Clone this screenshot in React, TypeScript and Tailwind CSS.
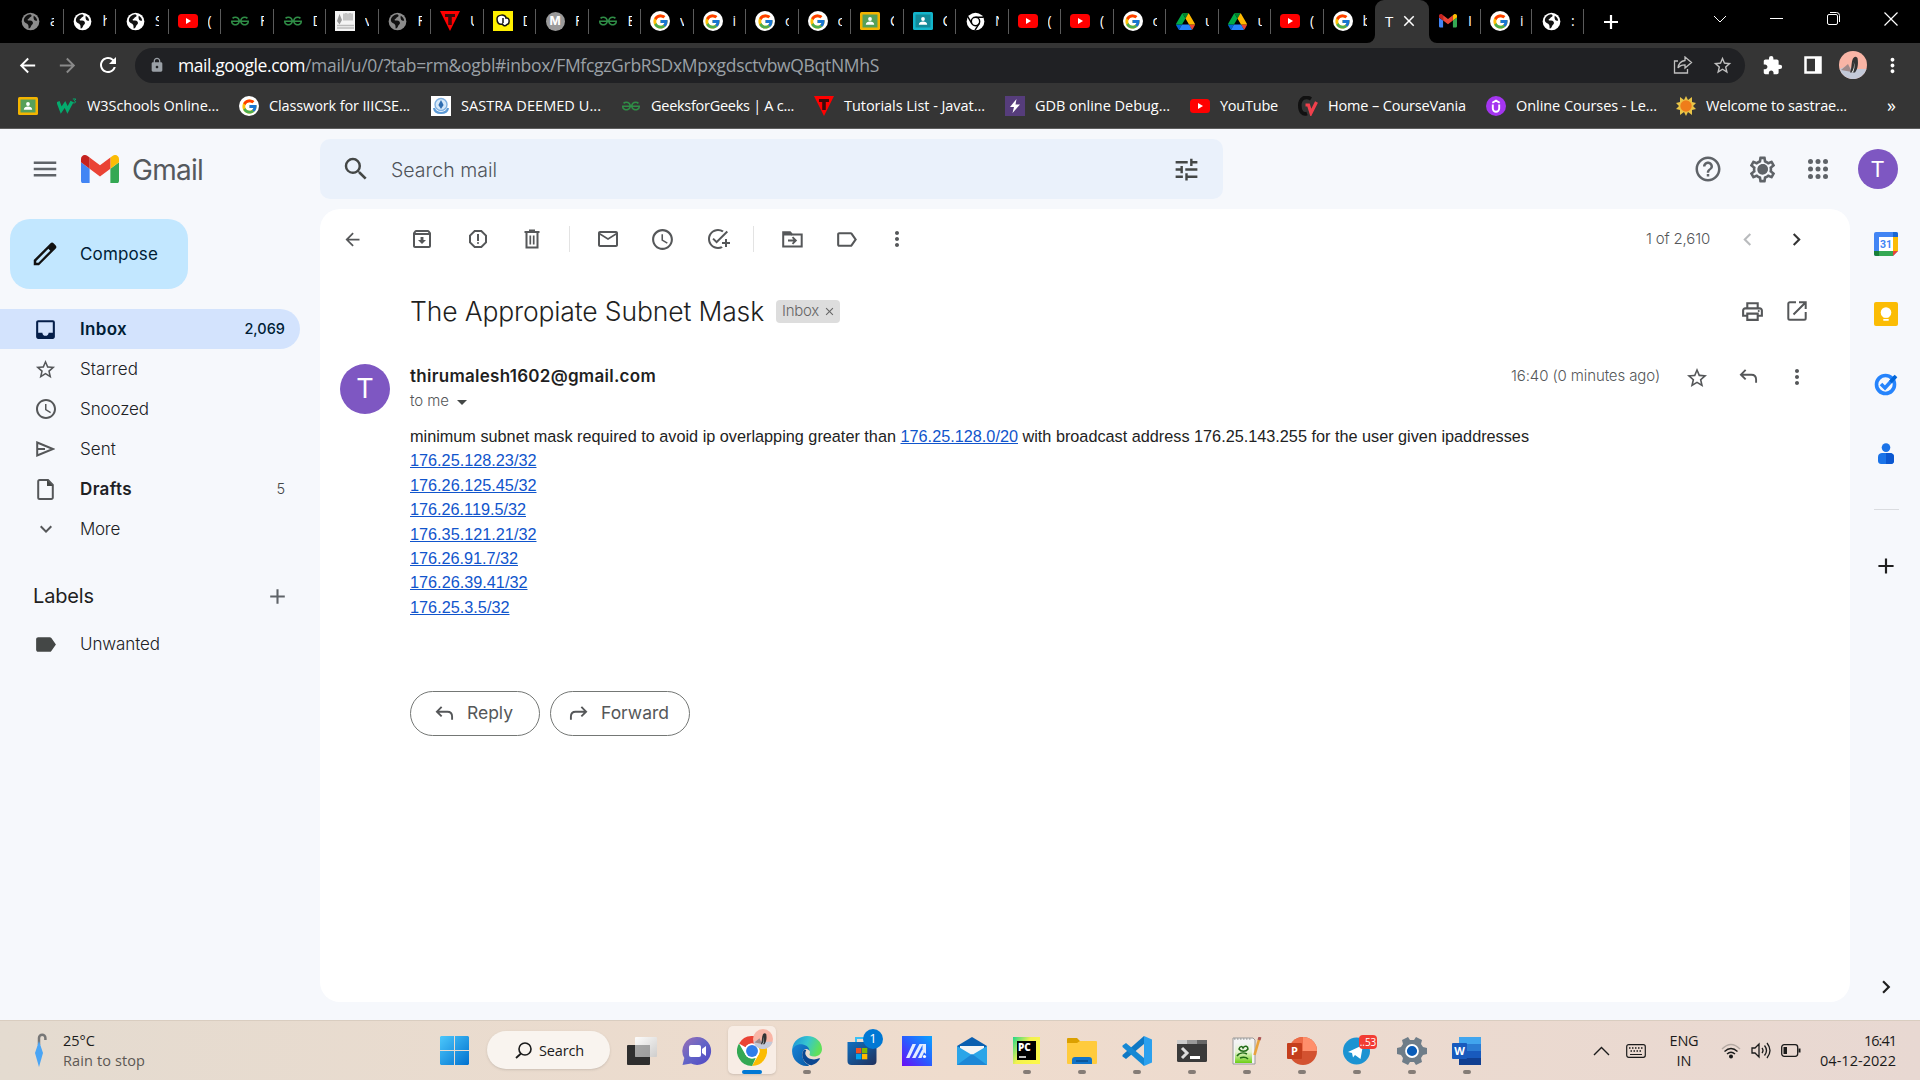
import React, { useLayoutEffect, useRef, useState } from "react";
import {
  MdMenu, MdSearch, MdTune, MdHelpOutline, MdOutlineSettings, MdOutlineArchive, MdOutlineReportGmailerrorred,
  MdMailOutline, MdAccessTime, MdAddTask, MdLabelOutline, MdMoreVert,
  MdChevronLeft, MdChevronRight, MdOutlinePrint, MdStarBorder, MdInbox,
  MdExpandMore, MdLabel, MdAdd, MdArrowBack, MdArrowForward, MdRefresh, MdLock, MdExtension, MdClose, MdArrowDropDown,
} from "react-icons/md";
import { FcGoogle } from "react-icons/fc";
import { SiGeeksforgeeks } from "react-icons/si";

/* Text whose tracking is adjusted so that it spans exactly `w` pixels. */
function Fit({ w, className = "", children }: { w: number; className?: string; children: string }) {
  const ref = useRef<HTMLSpanElement>(null);
  const [ls, setLs] = useState(0);
  useLayoutEffect(() => {
    if (ref.current) setLs((w - ref.current.getBoundingClientRect().width) / children.length);
  }, []);
  return (
    <span ref={ref} className={"inline-block shrink-0 whitespace-pre " + className} style={{ letterSpacing: ls + "px" }}>
      {children}
    </span>
  );
}

function Cell({ w, children, className = "" }: { w: number; children?: React.ReactNode; className?: string }) {
  return (
    <div className={"flex h-full shrink-0 items-center justify-center " + className} style={{ width: w }}>
      {children}
    </div>
  );
}

/* ---------- favicons ---------- */
const Globe = ({ c = "#fff" }: { c?: string }) => (
  <svg width="19" height="19" viewBox="0 0 20 20">
    <circle cx="10" cy="10" r="9.3" fill={c} />
    <path d="M3.2 7C4.300 4.600 6.500 2.800 9.600 2.400c1.800.6 2 1.800.8 2.700-1.500.5-1.400 1.700-2.800 2.200-1.200.5-.6 1.600.5 1.700 2 0 4.200.3 4.500 2.200.2 1.800-1.600 2-2 3.600-.3 1.600-1.500 2.600-2.300 2.700-.8-1.500.1-3-.9-4.200C6.600 12 4.200 11.500 3.300 10c-.4-1-.4-2-.1-3zM13.500 4c2 1.100 3.200 2.800 3.500 5-1.200.6-2.600.1-3.200-.8-.6-1.200-.9-2.900-.3-4.200z" fill="#111" />
  </svg>
);
const YT = ({ s = 20 }: { s?: number }) => (
  <svg width={s} height={s} viewBox="0 0 20 20">
    <rect x="0" y="3" width="20" height="14" rx="3.500" fill="#f00" />
    <path d="M8 7l5 3-5 3z" fill="#fff" />
  </svg>
);
const G = () => (
  <span className="flex size-5 items-center justify-center rounded-full bg-white"><FcGoogle size={17} /></span>
);
const GfG = ({ s = 18 }: { s?: number }) => <SiGeeksforgeeks size={s} color="#2f8d46" />;
const Classroom = ({ frame = "#f4b400", board = "#57a05a" }: { frame?: string; board?: string }) => (
  <svg width="20" height="18" viewBox="0 0 20 18">
    <rect width="20" height="18" rx="1.500" fill={frame} />
    <rect x="2.500" y="2.500" width="15" height="13" fill={board} />
    <circle cx="10" cy="7" r="1.900" fill="#fff" />
    <path d="M5.800 12.800c0-2.300 2-3.200 4.200-3.200s4.200.9 4.200 3.200z" fill="#fff" />
  </svg>
);
const Drive = () => (
  <svg width="19" height="17" viewBox="0 0 87.3 78">
    <path d="m6.600 66.850 3.850 6.650c.8 1.400 1.950 2.500 3.300 3.300l13.750-23.800h-27.500c0 1.550.4 3.100 1.200 4.500z" fill="#0066da" />
    <path d="m43.650 25-13.750-23.800c-1.350.8-2.500 1.900-3.300 3.300l-25.400 44a9.060 9.060 0 0 0 -1.200 4.500h27.500z" fill="#00ac47" />
    <path d="m73.550 76.800c1.350-.8 2.500-1.900 3.300-3.300l1.600-2.750 7.650-13.250c.8-1.400 1.200-2.950 1.200-4.500h-27.502l5.852 11.500z" fill="#ea4335" />
    <path d="m43.650 25 13.750-23.800c-1.350-.8-2.900-1.200-4.500-1.200h-18.500c-1.600 0-3.150.45-4.500 1.200z" fill="#00832d" />
    <path d="m59.800 53h-32.300l-13.750 23.800c1.350.8 2.900 1.200 4.500 1.200h50.800c1.600 0 3.150-.45 4.500-1.200z" fill="#2684fc" />
    <path d="m73.400 26.500-12.700-22c-.8-1.400-1.950-2.500-3.300-3.300l-13.750 23.800 16.150 28h27.450c0-1.550-.4-3.100-1.200-4.500z" fill="#ffba00" />
  </svg>
);
const TriT = () => (
  <svg width="20" height="20" viewBox="0 0 20 20">
    <path d="M0 0h20L10 20z" fill="#f00" />
    <path d="M5 3h10v3h-3.200v8H8.200V6H5z" fill="#3a0a0a" />
  </svg>
);
const Sheet = () => (
  <svg width="20" height="20" viewBox="0 0 20 20">
    <rect width="20" height="20" fill="#f4f4f4" />
    <path d="M4.500 3l2.500 6-2.500 4.500L2 10z" fill="#999" />
    <path d="M9 2.500v7M11 2v7.500M13 2.500v7M15 2v7.500M17 2.500v7" stroke="#aaa" strokeWidth="1.300" />
    <path d="M2 14.500h17M2 17h17" stroke="#bbb" strokeWidth="1.500" />
  </svg>
);
const Yellow = () => (
  <svg width="20" height="20" viewBox="0 0 20 20">
    <rect width="20" height="20" fill="#fff000" />
    <path d="M4 8c0-5 9-5 9-1 4-1 4 6 1 6.500-2 2.500-4 1-4.500-.5C6 14 4 12 4 8z" fill="#fff" stroke="#111" strokeWidth="1.500" />
    <path d="M10 7v5" stroke="#111" strokeWidth="1.500" />
  </svg>
);
const MBall = () => (
  <span className="flex size-[19px] items-center justify-center rounded-full bg-[#9a9a9a] font-['Inter'] text-[12px] font-bold text-white">M</span>
);
const ChromeMono = () => (
  <svg width="19" height="19" viewBox="0 0 20 20">
    <circle cx="10" cy="10" r="9.300" fill="#fff" />
    <circle cx="10" cy="10" r="4.400" fill="#fff" stroke="#000" strokeWidth="1.500" />
    <path d="M10 5.600h8.500M6.200 12.200L2 5.200M13.800 12.200l-4.300 7" stroke="#000" strokeWidth="1.500" />
  </svg>
);
const MLogo = ({ w }: { w: number }) => (
  <svg width={w} height={w * 0.75} viewBox="52 42 88 66">
    <path fill="#4285f4" d="M58 108h14V74L52 59v43c0 3.320 2.690 6 6 6" />
    <path fill="#34a853" d="M120 108h14c3.320 0 6-2.690 6-6V59l-20 15" />
    <path fill="#fbbc04" d="M120 48v26l20-15v-8c0-7.420-8.470-11.650-14.400-7.200" />
    <path fill="#ea4335" d="M72 74V48l24 18 24-18v26L96 92" />
    <path fill="#c5221f" d="M52 51v8l20 15V48l-5.600-4.200c-5.940-4.450-14.400-.22-14.400 7.200" />
  </svg>
);
const W3 = () => (
  <svg width="20" height="18" viewBox="0 0 20 18">
    <path d="M1 4.500l3.200 8.500L8 7.500l2.500 5.500L15 4.500" fill="none" stroke="#04aa6d" strokeWidth="3.400" />
    <path d="M15.800 2h3l-1.500 1.800c2.200.2 1.600 2.800-1.200 2" fill="none" stroke="#04aa6d" strokeWidth="1" />
  </svg>
);
const Sastra = () => (
  <svg width="20" height="20" viewBox="0 0 20 20">
    <rect width="20" height="20" fill="#fff" />
    <circle cx="10" cy="8.500" r="6" fill="#d6e8f8" stroke="#7fb0e0" strokeWidth="1.400" />
    <path d="M10 4l2.600 5L10 13 7.400 9z" fill="#2f6db0" />
    <path d="M3 12q1 5 7 5t7-5" stroke="#5c9ad6" strokeWidth="2.200" fill="none" />
  </svg>
);
const Gdb = () => (
  <svg width="20" height="20" viewBox="0 0 20 20">
    <rect width="20" height="20" fill="#563d7c" />
    <path d="M11.500 3L5 11h4l-1.500 6L15 8.500h-4.500z" fill="#fff" />
  </svg>
);
const CV = () => (
  <svg width="20" height="20" viewBox="0 0 20 20">
    <path d="M13 3C7-1 1.800 3 1.800 9.500S5 19 9 17.500" fill="none" stroke="#111" strokeWidth="3.600" />
    <path d="M7.500 9h3l2.500 8L18.500 6" fill="none" stroke="#f0404c" strokeWidth="3.200" />
  </svg>
);
const Udemy = () => (
  <svg width="20" height="20" viewBox="0 0 20 20">
    <circle cx="10" cy="10" r="10" fill="#a435f0" />
    <path d="M6.800 8.500v4a3.200 3.200 0 0 0 6.400 0v-4M6.300 6.800L10 4.600l3.700 2.200" fill="none" stroke="#fff" strokeWidth="1.900" />
  </svg>
);
const Sun = () => (
  <svg width="20" height="20" viewBox="0 0 20 20">
    <path d="M10 0l2 4 4-3 0 5 4 1-3 3 3 3-4 1 0 5-4-3-2 4-2-4-4 3 0-5-4-1 3-3-3-3 4-1 0-5 4 3z" fill="#e9c447" />
    <circle cx="10" cy="10" r="5.700" fill="#ef7d1a" />
  </svg>
);
const Penguin = ({ s }: { s: number }) => (
  <svg width={s} height={s} viewBox="0 0 28 28">
    <circle cx="14" cy="14" r="14" fill="#f9b5a6" />
    <path d="M.6 18L8 15l6 3 13.500 0A14 14 0 0 1 .6 18z" fill="#c3c9d8" />
    <path d="M2 19l7-6 4 8z" fill="#a08a8a" />
    <path d="M14 7.500q2-3 4.500-.5c1 5 .5 11-2.500 14.500h-5c2-4 1-10 3-14z" fill="#333" />
    <path d="M14.800 11c.7 4 0 8-2.300 10.500H14c1.500-3 2-7 .8-10.500z" fill="#eee" />
  </svg>
);

const tabs: [React.ReactNode, string][] = [
  [<Globe c="#8c8c8c" />, "a"], [<Globe />, "h"], [<Globe />, "S"], [<YT />, "("], [<GfG />, "F"], [<GfG />, "D"],
  [<Sheet />, "v"], [<Globe c="#8c8c8c" />, "F"], [<TriT />, "U"], [<Yellow />, "D"], [<MBall />, "F"], [<GfG />, "E"],
  [<G />, "v"], [<G />, "i"], [<G />, "c"], [<G />, "c"], [<Classroom />, "C"], [<Classroom frame="#12b5cb" board="#128a99" />, "C"],
  [<ChromeMono />, "N"], [<YT />, "("], [<YT />, "("], [<G />, "c"], [<Drive />, "u"], [<Drive />, "u"], [<YT />, "("], [<G />, "b"],
];

function Tab({ icon, t, line = true, w = "w-[52.5px]" }: { icon: React.ReactNode; t: string; line?: boolean; w?: string }) {
  return (
    <div className={"flex h-[42px] shrink-0 items-center pl-[9px] " + w}>
      <span className="flex w-5 shrink-0 justify-center">{icon}</span>
      <span className="ml-[10px] w-[4px] overflow-hidden text-[14px] leading-5 text-white">{t}</span>
      {line && <span className="ml-auto h-[25px] w-px shrink-0 bg-[#5a5a5a]" />}
    </div>
  );
}

function BrowserChrome() {
  return (
    <div className="h-[129px] border-b border-[#5e5e5e] bg-[#353535] font-['Open_Sans','Noto_Sans',sans-serif]">
      <div className="flex h-[43px] bg-black pl-[11px]">
        {tabs.map(([icon, t], i) => (
          <Tab key={i} icon={icon} t={t} line={i < 25} />
        ))}
        <div className="relative -ml-px h-[43px] w-[54px] shrink-0 rounded-t-[9px] bg-[#353535]">
          <svg className="absolute bottom-0 -left-2" width="8" height="8"><path d="M8 0v8H0a8 8 0 0 0 8-8" fill="#353535" /></svg>
          <svg className="absolute -right-2 bottom-0" width="8" height="8"><path d="M0 0v8h8a8 8 0 0 1-8-8" fill="#353535" /></svg>
          <div className="flex h-[42px] items-center pl-[10px]">
            <span className="w-[13px] text-[15px] text-white">T</span>
            <MdClose size={18} color="#fff" className="ml-[2px]" />
          </div>
        </div>
        <Tab icon={<MLogo w={18} />} t="I" w="w-[52px]" />
        <Tab icon={<G />} t="i" w="w-[51px]" />
        <Tab icon={<Globe />} t=":" w="w-[52px]" />
        <Cell w={54}><svg width="16" height="16" viewBox="0 0 16 16"><path d="M8 1v14M1 8h14" stroke="#fff" strokeWidth="2.200" /></svg></Cell>
        <div className="ml-auto flex h-[37px] items-center">
          <Cell w={57}><svg width="14" height="8"><path d="M1 1l6 6 6-6" stroke="#fff" fill="none" /></svg></Cell>
          <Cell w={57}><span className="h-px w-[13px] bg-white" /></Cell>
          <Cell w={57}>
            <svg width="14" height="14"><rect x=".5" y="2.500" width="10" height="10" rx="1.500" stroke="#fff" fill="none" /><path d="M3 .5h6.500a3 3 0 0 1 3 3V10" stroke="#fff" fill="none" /></svg>
          </Cell>
          <Cell w={58}><svg width="14" height="14"><path d="M.5.5l13 13M13.500.5l-13 13" stroke="#fff" fill="none" strokeWidth="1.200" /></svg></Cell>
        </div>
      </div>
      <div className="flex h-[44px] items-center pl-[7px]">
        <Cell w={40}><MdArrowBack size={23} color="#fff" /></Cell>
        <Cell w={41}><MdArrowForward size={23} color="#8a8a8a" /></Cell>
        <Cell w={40}><MdRefresh size={24} color="#fff" /></Cell>
        <div className="ml-[7px] flex h-[35px] w-[1610px] items-center rounded-full bg-[#202124] pl-[14px]">
          <MdLock size={16} color="#9aa0a6" />
          <span className="ml-[13px] flex text-[17.500px]">
            <Fit w={127} className="text-white">mail.google.com</Fit>
            <Fit w={574} className="text-[#9aa0a6]">/mail/u/0/?tab=rm&ogbl#inbox/FMfcgzGrbRSDxMpxgdsctvbwQBqtNMhS</Fit>
          </span>
          <svg className="ml-auto" width="20" height="18" viewBox="0 0 20 18"><path d="M5 5H1.500v12h13v-4M12 1l6.500 5.500L12 12V8.800c-3.500 0-5.500 1-7 3.200.5-4 3-7 7-7.500z" fill="none" stroke="#c0c0c0" strokeWidth="1.300" /></svg>
          <MdStarBorder size={21} color="#c0c0c0" className="mr-[12px] ml-[19px]" />
        </div>
        <div className="ml-[6px] flex h-[44px] items-center">
          <Cell w={42}><MdExtension size={21} color="#fff" /></Cell>
          <Cell w={39}><svg width="18" height="18"><rect x="1.500" y="1.500" width="15" height="15" fill="none" stroke="#fff" strokeWidth="2.500" /><path d="M11 2h6v14h-6z" fill="#fff" /></svg></Cell>
          <Cell w={42}><Penguin s={28} /></Cell>
          <Cell w={37}><MdMoreVert size={23} color="#fff" /></Cell>
        </div>
      </div>
      <div className="flex h-[38px] items-center pl-[18px] text-[14.5px] text-white">
        <Classroom />
        <Bm icon={<W3 />} ml="ml-[19px]" w={132}>W3Schools Online...</Bm>
        <Bm icon={<G />} ml="ml-[20px]" w={141}>Classwork for IIICSE...</Bm>
        <Bm icon={<Sastra />} ml="ml-[21px]" w={140}>SASTRA DEEMED U...</Bm>
        <Bm icon={<GfG />} ml="ml-[20px]" w={143}>GeeksforGeeks | A c...</Bm>
        <Bm icon={<TriT />} ml="ml-[20px]" w={141}>Tutorials List - Javat...</Bm>
        <Bm icon={<Gdb />} ml="ml-[20px]" w={135}>GDB online Debug...</Bm>
        <Bm icon={<YT />} ml="ml-[20px]" w={58}>YouTube</Bm>
        <Bm icon={<CV />} ml="ml-[20px]" w={138}>Home – CourseVania</Bm>
        <Bm icon={<Udemy />} ml="ml-[20px]" w={141}>Online Courses - Le...</Bm>
        <Bm icon={<Sun />} ml="ml-[19px]" w={141}>Welcome to sastrae...</Bm>
        <span className="mr-[24px] ml-auto -translate-y-px text-[18px]">»</span>
      </div>
    </div>
  );
}
function Bm({ icon, ml, w, children }: { icon: React.ReactNode; ml: string; w: number; children: string }) {
  return (
    <div className={"flex shrink-0 items-center " + ml}>
      <span className="mr-[10px] flex w-5 justify-center">{icon}</span>
      <Fit w={w}>{children}</Fit>
    </div>
  );
}

const Apps = () => (
  <svg width="20" height="20" viewBox="0 0 20 20" fill="#5f6368">
    {[2.5, 10, 17.5].map((y) => [2.5, 10, 17.5].map((x) => <circle key={x + "-" + y} cx={x} cy={y} r="2.500" />))}
  </svg>
);
const Arrow = ({ flip = false, s = 19 }: { flip?: boolean; s?: number }) => (
  <svg width={s} height={s * 0.8} viewBox="0 0 20 16" className={flip ? "-scale-x-100" : ""}>
    <path d="M7 1L2 6l5 5M2 6h11c3.500 0 5 2 5 5v3.500" fill="none" stroke="#555759" strokeWidth="2" />
  </svg>
);
const Trash = () => (
  <svg width="16" height="20" viewBox="0 0 16 20" fill="none" stroke="#555759" strokeWidth="2">
    <path d="M2.500 4v14.500h11V4M.5 3h15M5 1.500h6" />
    <path d="M6.300 6.500v9M9.700 6.500v9" strokeWidth="1.700" />
  </svg>
);
const MoveTo = () => (
  <svg width="21" height="17" viewBox="0 0 21 17" fill="none" stroke="#555759" strokeWidth="2">
    <path d="M1.200 2v13.500h18.500V3.500H10L8 1.300H1.200z" />
    <path d="M1 1h7l2 2.500v1H1z" fill="#555759" stroke="none" />
    <path d="M6 9.500h7M10.500 6.200l3.300 3.300-3.300 3.300" strokeWidth="1.900" />
  </svg>
);
const OpenNew = () => (
  <svg width="20" height="20" viewBox="0 0 20 20" fill="none" stroke="#555759" strokeWidth="2">
    <path d="M9 1.300H2.800a1.500 1.500 0 0 0-1.500 1.500v14.400a1.500 1.500 0 0 0 1.500 1.500h14.400a1.500 1.500 0 0 0 1.500-1.500V11" />
    <path d="M12 1.300h6.700V8M18 2L6.500 13.500" />
  </svg>
);
const Page = () => (
  <svg width="17" height="21" viewBox="0 0 17 21">
    <path d="M1.200 2.500A1.500 1.500 0 0 1 2.700 1H11l4.800 5v12.500a1.500 1.500 0 0 1-1.500 1.500H2.700a1.500 1.500 0 0 1-1.500-1.500z" fill="none" stroke="#555759" strokeWidth="2" />
    <path d="M10 1v6h6z" fill="#444746" />
  </svg>
);
const Gear = () => (
  <span className="relative flex size-[31px] items-center justify-center">
    <MdOutlineSettings size={31} color="#5f6368" />
    <span className="absolute size-[10px] rounded-full bg-[#5f6368]" />
  </span>
);

function Header() {
  return (
    <header className="flex h-[80px] items-center">
      <div className="ml-[30px] w-[30px]"><MdMenu size={30} color="#5f6368" /></div>
      <div className="ml-[21px]"><MLogo w={38} /></div>
      <Fit w={71} className="mt-[2px] ml-[13px] text-[28px] leading-8 text-[#55595d]">Gmail</Fit>
      <div className="ml-[117px] flex h-[60px] w-[903px] items-center rounded-[10px] bg-[#eaf1fb] pl-[21px]">
        <MdSearch size={30} color="#444746" />
        <Fit w={106} className="mt-[3px] ml-[20px] text-[19.500px] font-light text-[#50545a]">Search mail</Fit>
        <MdTune size={29} color="#444746" className="mr-[22px] ml-auto" />
      </div>
      <div className="ml-auto flex h-full pr-[10px]">
        <Cell w={55}><MdHelpOutline size={30} color="#5f6368" /></Cell>
        <Cell w={55}><Gear /></Cell>
        <Cell w={55}><Apps /></Cell>
        <Cell w={65}><span className="flex size-10 items-center justify-center rounded-full bg-[#7e57c2] pt-px text-[22px] text-white">T</span></Cell>
      </div>
    </header>
  );
}

function NavRow({ icon, label, w, count, bold, active }: { icon: React.ReactNode; label: string; w: number; count?: string; bold?: boolean; active?: boolean }) {
  return (
    <div className={"flex h-10 w-[300px] items-center rounded-r-full pr-[15px] pl-[33px] " + (active ? "bg-[#d3e3fd] text-[#001d35]" : "text-[#202124]")}>
      <span className="flex w-[25px] justify-center text-[#555759]">{icon}</span>
      <Fit w={w} className={"mt-[2px] ml-[22px] text-[17px] " + (bold ? "font-semibold" : "font-light")}>{label}</Fit>
      {count && <span className={"ml-auto text-[14.5px] " + (active ? "font-medium" : "font-light text-[#444746]")}>{count}</span>}
    </div>
  );
}

function Sidebar() {
  return (
    <aside className="w-[320px] shrink-0 pt-[10px]">
      <div className="ml-[10px] flex h-[70px] w-[178px] items-center rounded-[20px] bg-[#c2e7ff] pl-[20px]">
        <svg width="30" height="30" viewBox="0 0 24 24"><path d="M20.410 4.940l-1.350-1.350a2 2 0 0 0-2.830 0L3 16.820V21h4.180L20.410 7.770a2 2 0 0 0 0-2.830zM6.700 19H5v-1.500L14.700 7.800l1.500 1.500z" fill="#111" /></svg>
        <Fit w={78} className="mt-px ml-[20px] text-[17px] text-[#001d35]">Compose</Fit>
      </div>
      <nav className="mt-[20px]">
        <NavRow active bold label="Inbox" w={47} count="2,069" icon={<MdInbox size={25} color="#041e49" />} />
        <NavRow label="Starred" w={58} icon={<MdStarBorder size={23} className="mt-px" />} />
        <NavRow label="Snoozed" w={69} icon={<MdAccessTime size={24} />} />
        <NavRow label="Sent" w={36} icon={<svg width="19" height="16" viewBox="0 0 19 16"><path d="M1.200 1.500L17 8 1.200 14.500V1.500zM1.500 8H9" fill="none" stroke="#555759" strokeWidth="2" /></svg>} />
        <NavRow bold label="Drafts" w={52} count="5" icon={<Page />} />
        <NavRow label="More" w={40} icon={<MdExpandMore size={24} />} />
      </nav>
      <div className="mt-[27px] flex h-10 items-center pl-[33px]">
        <Fit w={61} className="text-[20px] text-[#1f1f1f]">Labels</Fit>
        <MdAdd size={25} color="#5f6368" className="ml-[171px]" />
      </div>
      <div className="mt-[8px]">
        <NavRow label="Unwanted" w={80} icon={<MdLabel size={25} color="#444746" />} />
      </div>
    </aside>
  );
}

const ips = [
  ["176.25.128.23/32", 126.5], ["176.26.125.45/32", 126.5], ["176.26.119.5/32", 116], ["176.35.121.21/32", 126.5],
  ["176.26.91.7/32", 108], ["176.26.39.41/32", 117.5], ["176.25.3.5/32", 99.5],
] as const;

function Mail() {
  return (
    <main className="h-[793px] w-[1530px] shrink-0 rounded-[20px] bg-white text-[#555759]">
      <div className="flex h-[60px] items-center pl-[20px]">
        <Cell w={24}><MdArrowBack size={21} /></Cell>
        <Cell w={60} className="ml-[28px]"><MdOutlineArchive size={24} /></Cell>
        <Cell w={51}><MdOutlineReportGmailerrorred size={24} /></Cell>
        <Cell w={58}><Trash /></Cell>
        <Cell w={17}><span className="h-[26px] w-px bg-[#e3e3e3]" /></Cell>
        <Cell w={59}><MdMailOutline size={24} /></Cell>
        <Cell w={50}><MdAccessTime size={25} /></Cell>
        <Cell w={61}><MdAddTask size={24} /></Cell>
        <Cell w={11}><span className="h-[26px] w-px bg-[#e3e3e3]" /></Cell>
        <Cell w={66}><MoveTo /></Cell>
        <Cell w={43}><MdLabelOutline size={25} /></Cell>
        <Cell w={58}><MdMoreVert size={24} /></Cell>
        <Fit w={64} className="ml-[720px] text-[15px] font-light">1 of 2,610</Fit>
        <Cell w={26} className="ml-[24px] text-[#b9bbbd]"><MdChevronLeft size={25} /></Cell>
        <Cell w={26} className="ml-[23px] text-[#333]"><MdChevronRight size={25} /></Cell>
      </div>
      <div className="flex h-[84px] items-center pl-[90px]">
        <Fit w={354} className="mt-[2px] text-[26.500px] font-light text-[#1f1f1f]">The Appropiate Subnet Mask</Fit>
        <div className="ml-[12px] flex h-[23px] w-[64px] items-center rounded-[4px] bg-[#ddd] pl-[6px] text-[#666]">
          <Fit w={37} className="text-[15px] font-light">Inbox</Fit>
          <MdClose size={13} className="ml-[4px]" />
        </div>
        <Cell w={26} className="ml-[899px]"><MdOutlinePrint size={25} /></Cell>
        <Cell w={26} className="ml-[19px]"><OpenNew /></Cell>
      </div>
      <div className="flex h-[71px] pl-[20px]">
        <span className="mt-[11px] flex size-[50px] items-center justify-center rounded-full bg-[#7e57c2] text-[27px] text-white">T</span>
        <div className="ml-[20px] w-[1101px] pt-[12px]">
          <div className="flex h-[24px] items-center">
            <Fit w={246} className="text-[17px] font-semibold text-[#1f1f1f]">thirumalesh1602@gmail.com</Fit>
          </div>
          <div className="flex h-[25px] items-center text-[15px] font-light">
            <Fit w={39}>to me</Fit><MdArrowDropDown size={24} className="ml-px text-[#444746]" />
          </div>
        </div>
        <div className="flex h-[47px] items-center">
          <Fit w={149} className="text-[15px] font-light">16:40 (0 minutes ago)</Fit>
          <Cell w={26} className="mt-[2px] ml-[24px]"><MdStarBorder size={24} /></Cell>
          <Cell w={26} className="mt-px ml-[25px]"><Arrow /></Cell>
          <Cell w={26} className="ml-[23px]"><MdMoreVert size={24} /></Cell>
        </div>
      </div>
      <div className="pl-[90px] font-['Liberation_Sans',Arial,sans-serif] text-[16.250px] leading-[24.4px] text-[#222]">
        <div className="flex">
          <Fit w={490.5}>{"minimum subnet mask required to avoid ip overlapping greater than "}</Fit>
          <Fit w={117.5} className="text-[#1155cc] underline">176.25.128.0/20</Fit>
          <Fit w={511}>{" with broadcast address 176.25.143.255 for the user given ipaddresses"}</Fit>
        </div>
        {ips.map(([ip, w]) => (
          <div key={ip} className="flex"><Fit w={w} className="text-[#1155cc] underline">{ip}</Fit></div>
        ))}
      </div>
      <div className="mt-[72px] flex gap-[10px] pl-[90px] text-[17.500px]">
        <div className="flex h-[45px] w-[130px] items-center rounded-full border border-[#747775] pl-[24px]">
          <Arrow /><Fit w={46} className="-mt-px ml-[13px]">Reply</Fit>
        </div>
        <div className="flex h-[45px] w-[140px] items-center rounded-full border border-[#747775] pl-[18px]">
          <Arrow flip /><Fit w={68} className="-mt-px ml-[13px]">Forward</Fit>
        </div>
      </div>
    </main>
  );
}

function Rail() {
  return (
    <aside className="flex w-[70px] flex-col items-center pl-[2px]">
      <div className="flex h-[70px] items-center">
        <svg width="24" height="24" viewBox="0 0 24 24">
          <rect width="24" height="24" rx="2" fill="#4285f4" />
          <path d="M19 5h5v14h-5z" fill="#fbbc04" /><path d="M5 19h14v5H5z" fill="#34a853" />
          <path d="M0 19h5v5H2a2 2 0 0 1-2-2z" fill="#188038" /><path d="M19 0h3a2 2 0 0 1 2 2v3h-5z" fill="#1967d2" />
          <path d="M24 19v5h-5z" fill="#f6f8fc" /><path d="M19 19h5l-5 5z" fill="#ea4335" /><path d="M5 5h14v14H5z" fill="#fff" />
          <text x="12" y="16" textAnchor="middle" fontSize="10.500" fontWeight="700" fontFamily="Roboto" fill="#4285f4">31</text>
        </svg>
      </div>
      <div className="flex h-[70px] items-center">
        <svg width="24" height="24" viewBox="0 0 24 24"><rect width="24" height="24" rx="2" fill="#fbbc04" /><circle cx="12" cy="10.500" r="5.300" fill="#fff" /><path d="M9.300 13h5.400v2.500H9.300zM9.300 17h5.400v1.800H9.300z" fill="#fff" /></svg>
      </div>
      <div className="flex h-[70px] items-center">
        <svg width="24" height="24" viewBox="0 0 24 24"><circle cx="11.500" cy="12.500" r="9" fill="none" stroke="#2684fc" strokeWidth="3.600" /><path d="M7 12l4 4L21 5" fill="none" stroke="#2684fc" strokeWidth="3.600" /><path d="M16.500 10L22 4" stroke="#0066da" strokeWidth="3.600" /></svg>
      </div>
      <div className="flex h-[70px] items-center">
        <svg width="18" height="22" viewBox="0 0 18 22"><circle cx="9" cy="4.600" r="4.300" fill="#1a73e8" /><path d="M1 14c0-3 2-4 4-4h8c2 0 4 1 4 4v4c0 2-1.500 3-3 3H4c-1.500 0-3-1-3-3z" fill="#1a73e8" /><path d="M9 10h4c2 0 4 1 4 4v4c0 2-1.500 3-3 3H9z" fill="#0b57d0" /></svg>
      </div>
      <span className="mt-[20px] h-px w-[25px] bg-[#dadce0]" />
      <MdAdd size={26} color="#1f1f1f" className="mt-[43px]" />
      <MdChevronRight size={26} color="#1f1f1f" className="mt-[395px] -ml-px" />
    </aside>
  );
}

/* ---------- taskbar ---------- */
const Chrome = () => (
  <svg width="30" height="30" viewBox="0 0 48 48">
    <circle cx="24" cy="24" r="24" fill="#fff" />
    <path d="M3.200 12A24 24 0 0 1 44.800 12H24a12 12 0 0 0-10.400 6z" fill="#ea4335" />
    <path d="M44.800 12A24 24 0 0 1 24 48l10.400-18A12 12 0 0 0 34.400 18L31 12z" fill="#fbbc04" />
    <path d="M24 48A24 24 0 0 1 3.200 12l10.400 18A12 12 0 0 0 24 36l6-1z" fill="#34a853" />
    <path d="M24 12h20.800L34.400 18z" fill="#ea4335" />
    <circle cx="24" cy="24" r="12" fill="#fff" /><circle cx="24" cy="24" r="9.500" fill="#2f7de9" />
  </svg>
);
const Edge = () => (
  <svg width="30" height="30" viewBox="0 0 30 30">
    <defs>
      <linearGradient id="ed" x1="0" y1="0" x2="1" y2=".3"><stop offset="0" stopColor="#1b8fd8" /><stop offset=".55" stopColor="#36c6d0" /><stop offset="1" stopColor="#5fe05a" /></linearGradient>
      <linearGradient id="ed2" x1="0" y1="0" x2="1" y2="1"><stop offset="0" stopColor="#1784d8" /><stop offset="1" stopColor="#0c59a4" /></linearGradient>
    </defs>
    <path d="M.2 13C1 5 8 0 15 0c9 0 15 6 15 13 0 5-4 7.500-8 7.500-3 0-5-1-4.500-2.200C19 16 17 11.500 12 10.500 6 9 1.500 12 .2 16z" fill="url(#ed)" />
    <path d="M.1 15C1 10 6 7.500 11 8.500c4 .8 6.500 3.500 6.500 6.500-1-1.500-3-2.500-4.800-1.500C9 15.500 9 24 16 28.500l1 1.400C8 31 0 24 .1 15z" fill="url(#ed2)" />
    <path d="M11.500 14.500c-3.500 5 .5 14 8 14.800 3.500-.8 6.500-3.500 8.300-6.300.4-.7-.1-1-.8-.7-5 2.500-12 .7-13.500-3.800-.5-1.500 0-3 .8-4.300-1-.6-2-.5-2.800.3z" fill="#0b4791" />
  </svg>
);
const Store = () => (
  <svg width="30" height="30" viewBox="0 0 30 30">
    <defs><linearGradient id="st" x1="0" y1="0" x2="1" y2="1"><stop offset="0" stopColor="#0f6fc0" /><stop offset="1" stopColor="#20305c" /></linearGradient></defs>
    <path d="M9 6V2h12v4" fill="none" stroke="#3cc0f5" strokeWidth="2" />
    <path d="M.5 6h29v19a4 4 0 0 1-4 4h-21a4 4 0 0 1-4-4z" fill="url(#st)" />
    <path d="M9 12h5.300v5.300H9z" fill="#f25022" /><path d="M15 12h5.300v5.300H15z" fill="#7fba00" /><path d="M9 18h5.300v5.300H9z" fill="#00a4ef" /><path d="M15 18h5.300v5.300H15z" fill="#ffb900" />
  </svg>
);
const taskIcons: React.ReactNode[] = [
  <svg width="30" height="28" viewBox="0 0 30 28"><defs><linearGradient id="tv" x1="0" y1="0" x2="1" y2="1"><stop offset="0" stopColor="#fff" /><stop offset="1" stopColor="#ccc" /></linearGradient></defs><rect y="8" width="23" height="20" rx="1" fill="#2e2e2e" /><rect x="8" width="22" height="20" rx="1" fill="url(#tv)" opacity=".93" /><path d="M8 8h15v12H8z" fill="#8a8a8a" opacity=".7" /></svg>,
  <svg width="30" height="30" viewBox="0 0 30 30"><defs><linearGradient id="mt" x1="0" y1="0" x2="1" y2="1"><stop offset="0" stopColor="#9b6fb5" /><stop offset=".5" stopColor="#6264c7" /><stop offset="1" stopColor="#4f46c4" /></linearGradient></defs><path d="M15 1a14 14 0 1 1-6 26.600L.5 29l1.800-7A14 14 0 0 1 15 1z" fill="url(#mt)" /><rect x="7" y="9" width="12" height="12" rx="2" fill="#fff" /><path d="M20 13l4-3v10l-4-3z" fill="#fff" /></svg>,
  <Chrome />,
  <Edge />,
  <Store />,
  <svg width="30" height="30" viewBox="0 0 30 30"><defs><linearGradient id="ma" x1="0" y1="1" x2="1" y2="0"><stop offset="0" stopColor="#6a0cf5" /><stop offset=".5" stopColor="#2a5cff" /><stop offset="1" stopColor="#0aa4ff" /></linearGradient></defs><path d="M0 0h30v30H0z" fill="url(#ma)" /><path d="M4 22L10.500 8h3.500L7.500 22zM10 22l7.500-14H21l-7.500 14zM16 22l4-8h3l-3.500 8zM20.500 8H24v10l-3.500-3z" fill="#e3ecff" /><circle cx="22.500" cy="20.500" r="1.600" fill="#fff" /></svg>,
  <svg width="30" height="28" viewBox="0 0 30 28"><path d="M0 9L15 0l15 9v6H0z" fill="#0a5fb0" /><path d="M3 9h24v9H3z" fill="#f5f5f5" /><path d="M0 9l15 9L30 9v19H0z" fill="#2ba5e8" /><path d="M0 28l15-11L30 28z" fill="#1d87d6" /></svg>,
  <svg width="27" height="27" viewBox="0 0 27 27"><defs><linearGradient id="pc" x1="0" y1="0" x2="1" y2=".6"><stop offset="0" stopColor="#21d789" /><stop offset=".5" stopColor="#f3f14f" /><stop offset="1" stopColor="#fcf84a" /></linearGradient></defs><path d="M0 0h27v27H0z" fill="url(#pc)" /><path d="M4 4h19v19H4z" fill="#000" /><text x="5" y="13.500" fontSize="10" fontWeight="800" fontFamily="Open Sans" fill="#fff">PC</text><path d="M6 20h7" stroke="#fff" strokeWidth="1.500" /></svg>,
  <svg width="30" height="28" viewBox="0 0 30 28"><path d="M0 2a1 1 0 0 1 1-1h9l3 3h15v6H0z" fill="#dba000" /><path d="M0 6h10l3-2h16a1 1 0 0 1 1 1v21a1 1 0 0 1-1 1H1a1 1 0 0 1-1-1z" fill="#ffcb3d" /><path d="M5 27v-4a3 3 0 0 1 3-3h14a3 3 0 0 1 3 3v4z" fill="#1173c8" /><path d="M9 24h12" stroke="#0a4c8c" strokeWidth="1.500" /></svg>,
  <svg width="30" height="30" viewBox="0 0 30 30"><path d="M22 0l8 3.500v23L22 30z" fill="#2ba0ee" /><path d="M22 0v8L4 23 .5 20.500V19z" fill="#0f78c4" /><path d="M22 30v-8L4 7 .5 9.500V11z" fill="#1588d4" /></svg>,
  <svg width="30" height="22" viewBox="0 0 30 22"><rect width="30" height="22" rx="1.500" fill="#3a3a3a" /><path d="M0 0h10v4H0z" fill="#ccc" /><path d="M10 0h10v4H10z" fill="#999" /><path d="M20 0h10v4H20z" fill="#666" /><path d="M5 8l5 5-5 5" fill="none" stroke="#ddd" strokeWidth="3" /><path d="M13 17.500h10" stroke="#fff" strokeWidth="3" /></svg>,
  <svg width="30" height="28" viewBox="0 0 30 28"><defs><linearGradient id="np" x1="0" y1="0" x2="0" y2="1"><stop offset="0" stopColor="#f2f4f2" /><stop offset=".45" stopColor="#e4f3cf" /><stop offset="1" stopColor="#6ccf12" /></linearGradient></defs><path d="M1 1h20l2 2v24H1z" fill="#f4f4f4" stroke="#999" /><path d="M2 2h18" stroke="#888" strokeDasharray="1.500 1.500" /><path d="M3 6h17v20H3z" fill="url(#np)" /><path d="M7 12c1-3 3-3 4-1 2-3 5-2 5 1-2 3-7 3-9 0zM5 19c2-3 6-4 10-2M8 21c3-1 6-1 8 1" stroke="#1f6a14" strokeWidth="1.500" fill="none" /><path d="M27.500 1L22.500 18" stroke="#e8a33d" strokeWidth="2.600" /><path d="M28 0l-1 3" stroke="#a55" strokeWidth="3" /></svg>,
  <svg width="30" height="28" viewBox="0 0 30 28"><circle cx="16" cy="14" r="14" fill="#d35230" /><path d="M16 0a14 14 0 0 1 14 14H16z" fill="#ff8f6b" /><path d="M16 0v14H2A14 14 0 0 1 16 0z" fill="#ed6c47" /><rect y="6" width="15" height="16" rx="1" fill="#c43e1c" /><text x="7.500" y="18" textAnchor="middle" fontSize="11" fontWeight="700" fontFamily="Open Sans" fill="#fff">P</text></svg>,
  <svg width="30" height="28" viewBox="0 0 30 28"><circle cx="14.500" cy="14" r="13.500" fill="#1c93d2" /><path d="M6 15l15-7-2.500 14-5.500-4-2 2.500-1-4.500z" fill="#fff" /></svg>,
  <svg width="30" height="28" viewBox="0 0 30 28"><path d="M11 0l2 3h4l2-3 6 3-1 4 2 3 4 1v6l-4 1-2 3 1 4-6 3-2-3h-4l-2 3-6-3 1-4-2-3-4-1v-6l4-1 2-3-1-4z" fill="#6f7d88" /><circle cx="15" cy="14" r="6" fill="#0a5db8" stroke="#fff" strokeWidth="1.800" /></svg>,
  <svg width="30" height="28" viewBox="0 0 30 28"><path d="M7 0h22v7H7z" fill="#41a5ee" /><path d="M7 7h22v7H7z" fill="#2b7cd3" /><path d="M7 14h22v7H7z" fill="#185abd" /><path d="M7 21h22v7H7z" fill="#103f91" /><rect y="6" width="15" height="16" rx="1" fill="#185abd" /><text x="7.500" y="18" textAnchor="middle" fontSize="11" fontWeight="700" fontFamily="Open Sans" fill="#fff">W</text></svg>,
];

function Taskbar() {
  return (
    <footer className="flex h-[60px] border-t border-[#d9cdc0] bg-linear-to-r from-[#e4dbd0] via-[#efdccd] to-[#e8d8d2] font-['Open_Sans','Noto_Sans',sans-serif] text-[#1b1b1b]">
      <div className="flex w-[440px] items-center pl-[34px]">
        <svg width="14" height="36" viewBox="0 0 14 36"><path d="M5 12V5a3.200 3.200 0 0 1 6.400 0v2" fill="none" stroke="#777" strokeWidth="2.500" /><path d="M5 8l4 12-4 14L1 20z" fill="#4aa5f5" /></svg>
        <div className="ml-[15px] flex flex-col items-start text-[14.500px] leading-5">
          <Fit w={32}>25°C</Fit>
          <Fit w={82} className="text-[#5c5753]">Rain to stop</Fit>
        </div>
      </div>
      <div className="flex w-[29px] items-center">
        <svg width="29" height="29" viewBox="0 0 29 29"><defs><linearGradient id="wn" x1="0" y1="0" x2="1" y2="1"><stop offset="0" stopColor="#4cc8fb" /><stop offset="1" stopColor="#0071cf" /></linearGradient></defs><path d="M1 0h13v14H0V1zM15 0h13l1 1v13H15zM0 15h14v14H1l-1-1zM15 15h14v13l-1 1H15z" fill="url(#wn)" /></svg>
      </div>
      <div className="mt-[10px] ml-[18px] flex h-[38px] w-[123px] items-center rounded-full bg-[#f9f4ef] pl-[28px] shadow-sm">
        <svg width="17" height="17" viewBox="0 0 17 17"><circle cx="10" cy="7" r="6" fill="none" stroke="#1b1b1b" strokeWidth="1.600" /><path d="M6 11.500L1 16" stroke="#1b1b1b" strokeWidth="1.800" /></svg>
        <Fit w={45} className="mt-px ml-[7px] text-[14.500px]">Search</Fit>
      </div>
      <div className="ml-[4px] flex">
        {taskIcons.map((ic, i) => (
          <div key={i} className="relative flex w-[55px] items-center justify-center">
            {i === 2 && <span className="absolute top-[5px] left-[3.500px] h-12 w-12 rounded-[5px] bg-[#f8ede5] shadow-sm" />}
            <span className="relative">{ic}</span>
            {i === 2 && <span className="absolute top-[8px] right-[6px]"><Penguin s={20} /></span>}
            {i === 4 && <span className="absolute top-[8px] right-[6px] flex size-5 items-center justify-center rounded-full bg-[#0078d4] text-[13px] text-white">1</span>}
            {i === 13 && <span className="absolute top-[14px] left-[30px] flex h-[14px] w-[18px] items-center justify-center rounded-[4px] bg-[#f23c34] text-[10px] text-white">..53</span>}
            {i === 2 && <span className="absolute top-[49px] h-1 w-5 rounded-full bg-[#0078d4]" />}
            {(i === 3 || i > 6) && <span className="absolute top-[49px] h-1 w-2 rounded-full bg-[#857c76]" />}
          </div>
        ))}
      </div>
      <div className="ml-auto flex text-[14.500px] leading-5">
        <Cell w={36}><svg width="17" height="10"><path d="M1 9l7.500-7.500L16 9" fill="none" stroke="#1b1b1b" strokeWidth="1.400" /></svg></Cell>
        <Cell w={34}><svg width="20" height="14"><rect x=".7" y=".7" width="18.600" height="12.600" rx="2" fill="none" stroke="#1b1b1b" strokeWidth="1.200" /><path d="M3 4h14M4.500 7h12" stroke="#1b1b1b" strokeWidth="1.500" strokeDasharray="1.500 1.500" /><path d="M4 10.500h12" stroke="#1b1b1b" /></svg></Cell>
        <Cell w={62} className="flex-col"><Fit w={29}>ENG</Fit><Fit w={15}>IN</Fit></Cell>
        <Cell w={32}><svg width="20" height="16" viewBox="0 0 20 16" fill="none" stroke="#1b1b1b" strokeWidth="1.400"><path d="M1 6q9-9 18 0" stroke="#b5aaa4" /><path d="M3.500 8.500q6.500-6 13 0M6 11q4-3.500 8 0" /><circle cx="10" cy="13.500" r="1.300" fill="#1b1b1b" /></svg></Cell>
        <Cell w={28}><svg width="20" height="17" viewBox="0 0 20 17" fill="none" stroke="#1b1b1b" strokeWidth="1.300"><path d="M1 6h3l4-4v13l-4-4H1zM11 6q2 2.500 0 5M13.500 3.500q4 5 0 10M16 1q6 7.500 0 15" /></svg></Cell>
        <Cell w={31}><svg width="20" height="13" viewBox="0 0 20 13"><rect x=".7" y=".7" width="16" height="11.600" rx="2.500" fill="none" stroke="#1b1b1b" strokeWidth="1.300" /><path d="M2.500 3h3.500v7H2.500zM17.500 4.500h2v4h-2z" fill="#1b1b1b" /></svg></Cell>
        <div className="mr-[24px] ml-[14px] flex w-[76px] flex-col items-end justify-center"><Fit w={32}>16:41</Fit><Fit w={76}>04-12-2022</Fit></div>
      </div>
    </footer>
  );
}

export default function App() {
  return (
    <div className="flex h-[1080px] w-[1920px] flex-col overflow-hidden bg-[#f6f8fc]">
      <BrowserChrome />
      <div className="flex h-[891px] flex-col font-['Inter',sans-serif]">
        <Header />
        <div className="flex">
          <Sidebar />
          <Mail />
          <Rail />
        </div>
      </div>
      <Taskbar />
    </div>
  );
}
